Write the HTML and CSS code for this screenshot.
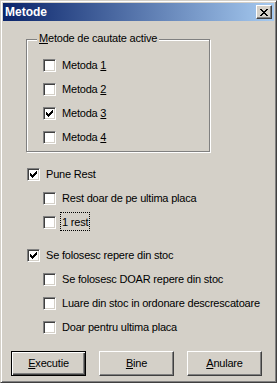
FILE: index.html
```html
<!DOCTYPE HTML>
<html lang="ro">
<head>
    <meta charset="UTF-8">
    <title>Metode</title>
    <link rel="stylesheet" href="styles.css">
</head>
<body>

<div class="window">
    <!-- title bar -->
    <div class="titlebar">
        <span class="title">Metode</span>
        <span class="close">
            <svg width="8" height="7" viewBox="0 0 8 7" shape-rendering="crispEdges">
                <path d="M0 0h2v1H0z M6 0h2v1H6z M1 1h2v1H1z M5 1h2v1H5z M2 2h4v1H2z M3 3h2v1H3z M2 4h4v1H2z M1 5h2v1H1z M5 5h2v1H5z M0 6h2v1H0z M6 6h2v1H6z" fill="#000"/>
            </svg>
        </span>
    </div>

    <div class="content">
        <!-- metode de cautate -->
        <div class="group">
            <span class="caption"><u>M</u>etode de cautate active</span>
            <div class="check"><span class="box"></span><span class="label">Metoda <u>1</u></span></div>
            <div class="check"><span class="box"></span><span class="label">Metoda <u>2</u></span></div>
            <div class="check"><span class="box checked"></span><span class="label">Metoda <u>3</u></span></div>
            <div class="check"><span class="box"></span><span class="label">Metoda <u>4</u></span></div>
        </div>

        <div class="options">
            <div class="check"><span class="box checked"></span><span class="label">Pune Rest</span></div>
            <div class="check sub"><span class="box"></span><span class="label">Rest doar de pe ultima placa</span></div>
            <div class="check sub"><span class="box"></span><span class="label focus">1 rest</span></div>
        </div>

        <div class="options second">
            <div class="check"><span class="box checked"></span><span class="label">Se folosesc repere din stoc</span></div>
            <div class="check sub"><span class="box"></span><span class="label">Se folosesc DOAR repere din stoc</span></div>
            <div class="check sub"><span class="box"></span><span class="label">Luare din stoc in ordonare descrescatoare</span></div>
            <div class="check sub"><span class="box"></span><span class="label">Doar pentru ultima placa</span></div>
        </div>

        <!-- butoane -->
        <div class="buttons">
            <div class="btn default"><u>E</u>xecutie</div>
            <div class="btn"><u>B</u>ine</div>
            <div class="btn"><u>A</u>nulare</div>
        </div>
    </div>
</div>

</body>
</html>
```

FILE: styles.css
```css
body {
    margin: 0;
    background: #d4d0c8;
    font-family: "Liberation Sans", Arial, sans-serif;
    font-size: 11px;
    color: #000;
}
.window {
    width: 277px;
    height: 383px;
    box-sizing: border-box;
    background: #d4d0c8;
    border: 1px solid;
    border-color: #d4d0c8 #404040 #404040 #d4d0c8;
    box-shadow: inset 1px 1px 0 #fff, inset -1px -1px 0 #808080;
    padding: 2px;
}
.titlebar {
    height: 18px;
    background: linear-gradient(to right, #0a246a, #a6caf0);
    display: flex;
    align-items: center;
    justify-content: space-between;
    padding: 0 2px;
}
.title {
    color: #fff;
    font-weight: bold;
    font-size: 12px;
    line-height: 14px;
}
.close {
    width: 16px;
    height: 14px;
    box-sizing: border-box;
    border: 1px solid;
    border-color: #fff #404040 #404040 #fff;
    box-shadow: inset -1px -1px 0 #808080;
    background: #d4d0c8;
    display: flex;
    align-items: center;
    justify-content: center;
}
.content {
    padding-top: 18px;
    letter-spacing: -0.2px;
}
.group {
    position: relative;
    width: 184px;
    height: 113px;
    box-sizing: border-box;
    margin-left: 23px;
    border: 1px solid #808080;
    box-shadow: 1px 1px 0 #fff, inset 1px 1px 0 #fff;
    padding: 19px 0 0 16px;
    display: flex;
    flex-direction: column;
    gap: 11px;
}
.caption {
    position: absolute;
    top: -8px;
    left: 10px;
    padding: 0 2px;
    background: #d4d0c8;
    line-height: 13px;
}
.check {
    display: flex;
    align-items: center;
    gap: 6px;
    height: 13px;
}
.box {
    width: 13px;
    height: 13px;
    box-sizing: border-box;
    flex: none;
    background: #fff;
    border: 1px solid;
    border-color: #808080 #fff #fff #808080;
    box-shadow: inset 1px 1px 0 #404040, inset -1px -1px 0 #d4d0c8;
}
.box.checked {
    background: #fff url("data:image/svg+xml,%3Csvg xmlns='http://www.w3.org/2000/svg' width='11' height='11' shape-rendering='crispEdges'%3E%3Cpath transform='translate(2 2)' d='M0 2h1v1h1v1h1V3h1V2h1V1h1V0h1v3H6v1H5v1H4v1H3v1H2V6H1V5H0z'/%3E%3C/svg%3E") no-repeat;
}
.label {
    line-height: 13px;
    white-space: nowrap;
}
.label.focus {
    padding: 3px 1px 1px 1px;
    margin: -3px -1px -1px -1px;
    outline: 1px dotted #000;
}
.options {
    margin-top: 16px;
    margin-left: 24px;
    display: flex;
    flex-direction: column;
    gap: 11px;
}
.options.second {
    margin-top: 20px;
}
.sub {
    margin-left: 16px;
}
.buttons {
    margin-top: 17px;
    margin-left: 8px;
    display: flex;
    gap: 13px;
}
.btn {
    width: 75px;
    height: 25px;
    box-sizing: border-box;
    border: 1px solid;
    border-color: #fff #404040 #404040 #fff;
    box-shadow: inset -1px -1px 0 #808080;
    display: flex;
    align-items: center;
    justify-content: center;
    line-height: 13px;
}
.btn.default {
    border-color: #000;
    box-shadow: inset 1px 1px 0 #fff, inset -1px -1px 0 #404040, inset -2px -2px 0 #808080;
}
```
